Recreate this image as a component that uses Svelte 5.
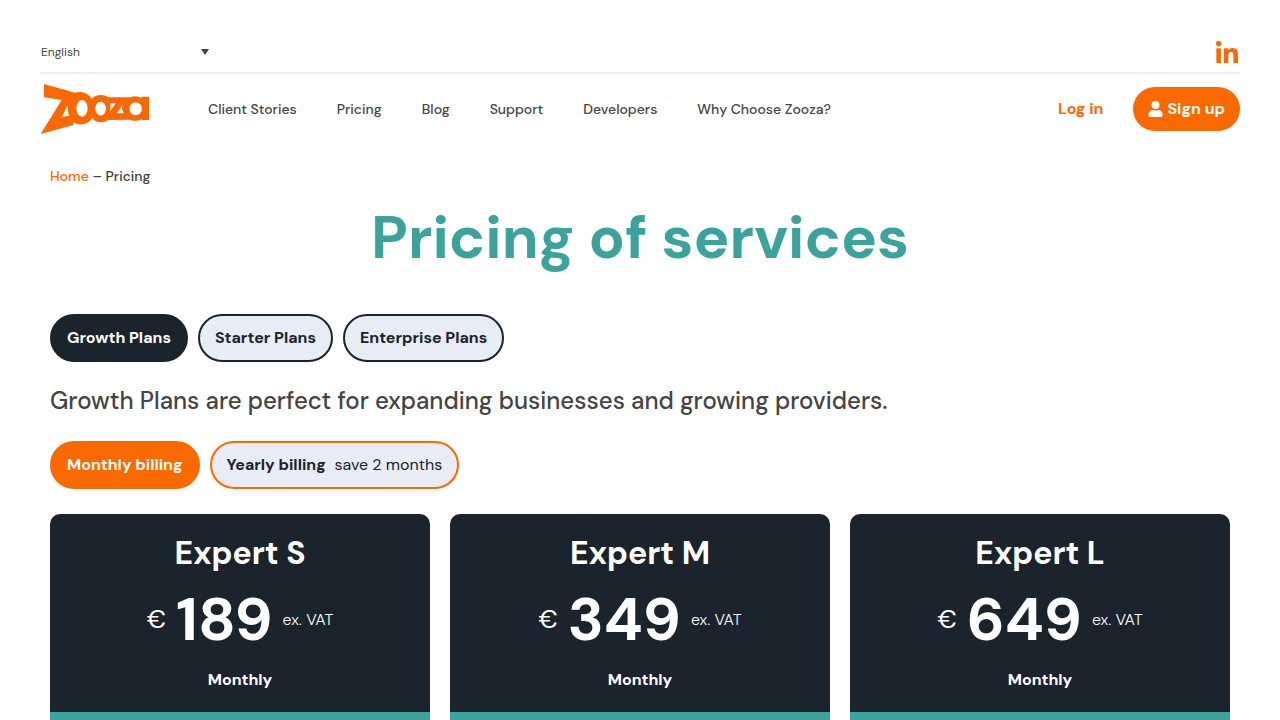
<script lang="ts">
	const nav = ['Client Stories', 'Pricing', 'Blog', 'Support', 'Developers', 'Why Choose Zooza?'];
	const groups = ['Growth Plans', 'Starter Plans', 'Enterprise Plans'];
	const plans = [
		{ name: 'Expert S', price: 189 },
		{ name: 'Expert M', price: 349 },
		{ name: 'Expert L', price: 649 },
	];

	let group = $state('Growth Plans');
	let yearly = $state(false);
</script>

<header>
	<div class="topbar">
		<div class="language">
			<select aria-label="Language">
				<option>English</option>
			</select>
			<svg class="caret" viewBox="0 0 8 6" aria-hidden="true"><path d="M0 0h8L4 6z" /></svg>
		</div>
		<a class="social" href="#linkedin" aria-label="LinkedIn">
			<svg viewBox="0 0 448 448"><path d="M100 448H7V149h93zM54 108C24 108 0 83 0 54a54 54 0 0 1 108 0c0 29-24 54-54 54zM448 448h-93V302c0-34-1-79-48-79-49 0-56 38-56 77v148h-93V149h89v41h1c13-24 43-48 88-48 94 0 112 62 112 142z" /></svg>
		</a>
	</div>

	<div class="menubar">
		<a class="logo" href="#home" aria-label="Zooza">
			<svg viewBox="30 22 330 154">
				<path fill-rule="evenodd" d="M42 24L135 50Q168 42 185 68Q196 57 212 57Q226 57 235 64L300 64Q318 56 334 66V62H357V132H336V129Q320 139 300 131L235 132Q226 139 212 139Q196 139 187 126Q172 150 139 144L131 139L130 147L32 174L95 72L42 64ZM113 86L96 123L117 119Q112 103 113 86ZM241 82V105L257 82ZM278 85L261 112H281Q273 99 278 85Z" />
				<ellipse class="hole" cx="156" cy="97" rx="17" ry="25" />
				<ellipse class="hole" cx="212" cy="98" rx="16" ry="21" />
				<circle class="hole" cx="317" cy="98" r="19" />
			</svg>
		</a>
		<nav>
			{#each nav as item}
				<a href="#{item}">{item}</a>
			{/each}
		</nav>
		<a class="login" href="#login">Log in</a>
		<a class="signup" href="#signup">
			<svg viewBox="0 0 448 512" aria-hidden="true"><path d="M224 256a128 128 0 1 0 0-256 128 128 0 0 0 0 256zm90 32h-17a174 174 0 0 1-146 0h-17C60 288 0 348 0 422v42c0 27 21 48 48 48h352c27 0 48-21 48-48v-42c0-74-60-134-134-134z" /></svg>
			Sign up
		</a>
	</div>
</header>

<main>
	<div class="breadcrumb"><a href="#home">Home</a> – Pricing</div>
	<h1>Pricing of services</h1>

	<div class="pills">
		{#each groups as name}
			<button class="pill dark" class:active={group === name} onclick={() => (group = name)}>{name}</button>
		{/each}
	</div>

	<p class="lead">Growth Plans are perfect for expanding businesses and growing providers.</p>

	<div class="pills">
		<button class="pill orange" class:active={!yearly} onclick={() => (yearly = false)}>Monthly billing</button>
		<button class="pill orange" class:active={yearly} onclick={() => (yearly = true)}>
			Yearly billing <span class="save">save 2 months</span>
		</button>
	</div>

	<div class="plans">
		{#each plans as plan}
			<section class="plan">
				<h2>{plan.name}</h2>
				<div class="price">
					<span class="currency">€</span>
					<strong>{plan.price}</strong>
					<span class="vat">ex. VAT</span>
				</div>
				<div class="period">Monthly</div>
			</section>
		{/each}
	</div>
</main>

<style>
:global(body) {
	background: #fff;
	color: #444;
	font-family: 'DM Sans', Inter, sans-serif;
	font-size: 14px;
	font-weight: 500;
}
a { color: inherit; text-decoration: none; }

header, main { max-width: 1200px; margin: 0 auto; }
header { padding: 30px 40px 0; }
main { max-width: 1180px; padding: 0 50px; }

.topbar {
	display: flex;
	justify-content: space-between;
	align-items: center;
	height: 42px;
	border-bottom: 2px solid #e8ecf4;
}
.language { position: relative; width: 180px; }
.language select {
	width: 100%;
	padding: 0 1px;
	border: 0;
	background: none;
	appearance: none;
	color: #444;
	font-family: inherit;
	font-size: 12px;
}
.caret {
	position: absolute;
	right: 11px;
	top: 50%;
	width: 8px;
	height: 6px;
	margin-top: -2px;
	fill: #444;
	pointer-events: none;
}
.social svg { display: block; width: 22px; height: 22px; margin: 2px 2px 0 0; fill: #fa6900; }

.menubar { display: flex; align-items: center; height: 70px; }
.logo svg { display: block; width: 110px; height: 52px; fill: #fa6900; }
.logo .hole { fill: #fff; }
nav { display: flex; flex: 1; gap: 40px; margin-left: 58px; white-space: nowrap; }
.login, .signup { color: #fa6900; font-size: 16px; font-weight: 700; line-height: 20px; }
.login { margin-right: 30px; }
.signup {
	display: flex;
	align-items: center;
	gap: 4px;
	box-sizing: border-box;
	height: 44px;
	padding: 0 15px;
	border-radius: 22px;
	background: #fa6900;
	color: #fff;
}
.signup svg { width: 15px; height: 16px; fill: #fff; }

.breadcrumb { padding-top: 22px; color: #3c3c3c; line-height: 20px; }
.breadcrumb a { color: #fa6900; }
h1 {
	margin: 12px 0 36px;
	color: #3ba39c;
	font-size: 60px;
	font-weight: 700;
	line-height: 80px;
	text-align: center;
}

.pills { display: flex; gap: 10px; }
.pill {
	height: 48px;
	padding: 0 15px 2px;
	border: 2px solid #1b232c;
	border-radius: 24px;
	background: #e8ecf4;
	color: #1b232c;
	font-family: inherit;
	font-size: 16px;
	font-weight: 700;
	white-space: nowrap;
}
.pill.orange { border-color: #fa6900; }
.pill.active { color: #fff; }
.pill.dark.active { background: #1b232c; }
.pill.orange.active { background: #fa6900; }
.save { margin-left: 5px; font-weight: 400; }

.lead { margin: 23px 0 24px; font-size: 24px; line-height: 32px; }

.plans {
	display: grid;
	grid-template-columns: repeat(3, 1fr);
	gap: 20px;
	margin-top: 25px;
}
.plan {
	border-radius: 10px 10px 0 0;
	border-bottom: 8px solid #3ba39c;
	background: #1b232c;
	color: #fff;
	text-align: center;
}
h2 { margin: 0; padding-top: 18px; font-size: 32px; font-weight: 700; line-height: 42px; }
.price {
	display: flex;
	justify-content: center;
	align-items: center;
	gap: 10px;
	height: 90px;
}
.price strong { font-size: 60px; font-weight: 700; }
.currency { font-size: 25px; font-weight: 400; }
.vat { font-size: 16px; font-weight: 300; }
.period { padding: 4px 0 20px; font-size: 16px; font-weight: 700; line-height: 24px; }
</style>
